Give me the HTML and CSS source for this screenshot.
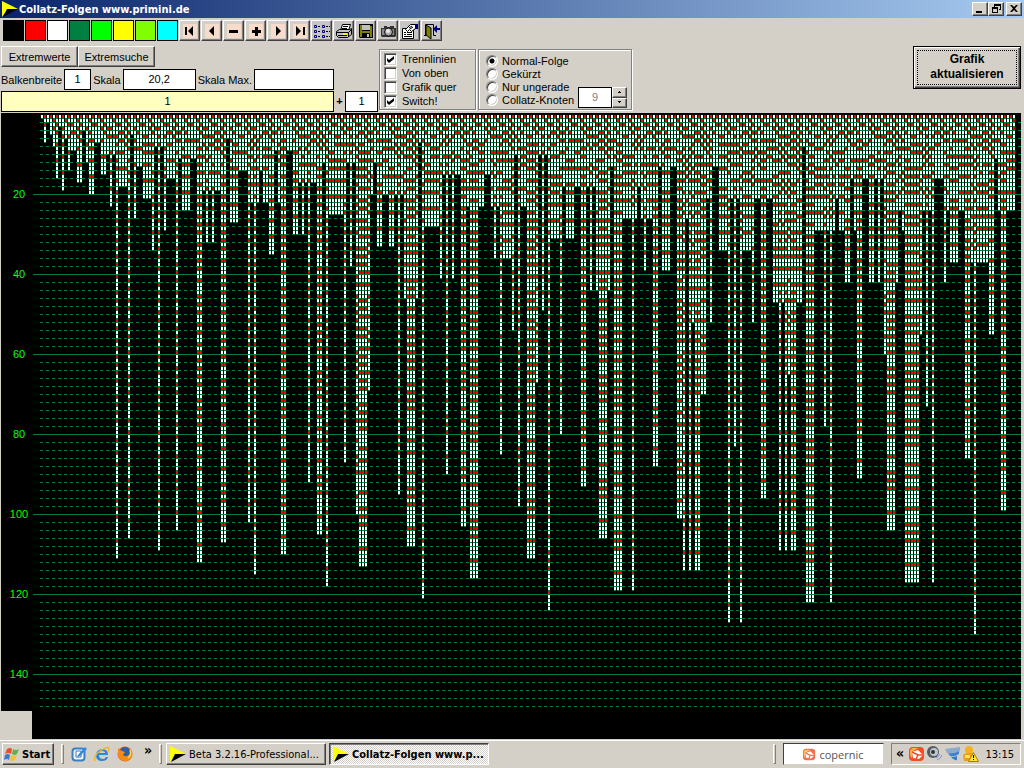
FILE: index.html
```html
<!DOCTYPE html>
<html lang="de">
<head>
    <meta charset="UTF-8">
    <meta name="viewport" content="width=device-width, initial-scale=1.0">
    <title>Collatz-Folgen www.primini.de</title>
    <link rel="stylesheet" href="styles.css">
</head>
<body>
    <svg class="symbols" aria-hidden="true">
        <symbol id="flag" viewBox="0 0 16 16">
            <path d="M0 0L16 8H6L0 16z" fill="#ff0"/>
            <path d="M16 8L1 16L5 8z" fill="#000"/>
        </symbol>
        <symbol id="copernic" viewBox="0 0 16 16">
            <rect x="0" y="1" width="15" height="14" rx="4" fill="#f04e23"/>
            <path d="M1 6Q1 2 5 2H9L3 6L3 12Q1 11 1 6z" fill="#ffb347"/>
            <path d="M3 6l6-2 5 5-4 4-6-1z" fill="#fff"/>
            <path d="M3 6l6 3 5 0M9 9l-2 4" stroke="#f04e23" stroke-width="1.500" fill="none"/>
        </symbol>
    </svg>

    <header class="titlebar">
        <svg class="icon"><use href="#flag"/></svg>
        <h1>Collatz-Folgen www.primini.de</h1>
        <button class="win-button" aria-label="Minimieren"><svg viewBox="0 0 12 10"><path d="M2 7h6v2H2z"/></svg></button>
        <button class="win-button" aria-label="Wiederherstellen"><svg viewBox="0 0 12 10"><path d="M4 0h7v6H9V5h1V2H5v1H4zM2 3h6v6H2zM3 5v3h4V5z" fill-rule="evenodd"/></svg></button>
        <button class="win-button close" aria-label="Schließen"><svg viewBox="0 0 12 10"><path d="M2 1h2l2 2 2-2h2L7 4.500l3 3.500H8L6 6 4 8H2l3-3.500z"/></svg></button>
    </header>

    <div class="toolbar">
        <button class="swatch black" aria-label="Schwarz"></button>
        <button class="swatch red" aria-label="Rot"></button>
        <button class="swatch white" aria-label="Weiß"></button>
        <button class="swatch green" aria-label="Dunkelgrün"></button>
        <button class="swatch lime" aria-label="Grün"></button>
        <button class="swatch yellow" aria-label="Gelb"></button>
        <button class="swatch chartreuse" aria-label="Gelbgrün"></button>
        <button class="swatch cyan" aria-label="Cyan"></button>
        <button class="tool nav" aria-label="Anfang"><svg viewBox="0 0 14 14"><path d="M2 3h2v8H2zM10 2v10L5 7z"/></svg></button>
        <button class="tool nav" aria-label="Zurück"><svg viewBox="0 0 14 14"><path d="M9 2v10L4 7z"/></svg></button>
        <button class="tool nav" aria-label="Weniger"><svg viewBox="0 0 14 14"><path d="M2 6h9v3H2z"/></svg></button>
        <button class="tool nav" aria-label="Mehr"><svg viewBox="0 0 14 14"><path d="M6 3h3v3h3v3H9v3H6V9H3V6h3z"/></svg></button>
        <button class="tool nav" aria-label="Vor"><svg viewBox="0 0 14 14"><path d="M5 2v10l5-5z"/></svg></button>
        <button class="tool nav" aria-label="Ende"><svg viewBox="0 0 14 14"><path d="M3 2v10l5-5zM10 3h2v8h-2z"/></svg></button>
        <button class="tool" aria-label="Liste">
            <svg viewBox="0 0 18 16"><path d="M1.500 2.500h2v2h-2zM9.500 2.500h2v2h-2zM1.500 7.500h2v2h-2zM9.500 7.500h2v2h-2zM1.500 12.500h2v2h-2zM9.500 12.500h2v2h-2z" fill="none" stroke="#000080"/><path d="M5 3.500h3M13 3.500h4M5 8.500h3M13 8.500h4M5 13.500h3M13 13.500h4" stroke="#000" stroke-dasharray="2 1"/></svg>
        </button>
        <button class="tool" aria-label="Drucken">
            <svg viewBox="0 0 18 16"><path d="M5.500 7.500L7.500 1.500H15.500L13.500 7.500z" fill="#fff" stroke="#000"/><path d="M8 3.500h5M7 5.500h5" stroke="#000"/><path d="M1.500 8.500L4.500 6.500H14.500L16.500 5.500V11.500L12.500 14.500H3.500L1.500 12.500z" fill="#c0c0c0" stroke="#000"/><path d="M2 9.500h11.500V14M13.500 9.500l3-3M3 12.500h9" stroke="#000" fill="none"/><path d="M8 11h4" stroke="#ff0" stroke-width="2"/></svg>
        </button>
        <button class="tool" aria-label="Speichern">
            <svg viewBox="0 0 18 16"><path d="M2 1h14v14H3l-1-1z"/><path d="M3 2h2v6h8V3h2v11h-2v-4H5v4H3z" fill="#808000"/><path d="M5 2h8v5H5zM10 11h2v3h-2z" fill="#c0c0c0"/></svg>
        </button>
        <button class="tool" aria-label="Foto">
            <svg viewBox="0 0 18 16"><path d="M2 5h3V3h3v1h3V3h4v2h2v8l-1 1H3l-1-1z" fill="#333"/><path d="M3 6h3v6H3zM13 6h2v6h-2z" fill="#888"/><circle cx="9.500" cy="9" r="4" fill="#aaa" stroke="#111"/><circle cx="9" cy="8" r="2" fill="#e8e8e8"/></svg>
        </button>
        <button class="tool" aria-label="Eigenschaften">
            <svg viewBox="0 0 18 16"><path d="M1.500 5.500h11v10h-11z" fill="#fff" stroke="#000"/><path d="M3 9.500h2M6 9.500h5M3 11.500h2M6 11.500h5M3 13.500h8" stroke="#000"/><path d="M4.500 6.500L9.500 1.500H14.500V5.500L10.500 8.500 8.500 6.500 6.500 8.500z" fill="#fff" stroke="#000"/><path d="M8 5l3-2M9 6l3-2" stroke="#000"/><path d="M14 1h3v5h-3z" fill="#000080"/></svg>
        </button>
        <button class="tool" aria-label="Beenden">
            <svg viewBox="0 0 18 16"><path d="M1 12.500h3M2.500 12V1.500H10.500V12.500H13" fill="none" stroke="#000"/><path d="M3 2l5 3v11l-5-4z" fill="#808000" stroke="#000"/><path d="M10 6l4-4v3h3v2h-3v3z" fill="#000080"/></svg>
        </button>
    </div>

    <div class="controls">
        <div class="settings">
            <div class="row">
                <button class="button">Extremwerte</button>
                <button class="button">Extremsuche</button>
            </div>
            <div class="row fields">
                <label for="barWidth">Balkenbreite</label>
                <input class="field narrow" type="text" id="barWidth" value="1">
                <label for="scale">Skala</label>
                <input class="field scale" type="text" id="scale" value="20,2">
                <label for="scaleMax">Skala Max.</label>
                <input class="field max" type="text" id="scaleMax">
            </div>
            <div class="row formula">
                <input class="field start" type="text" value="1" aria-label="Startwert">
                <label class="plus" for="step">+</label>
                <input class="field step" type="text" id="step" value="1">
            </div>
        </div>
        <div class="group checks">
            <label><input type="checkbox" checked>Trennlinien</label>
            <label><input type="checkbox">Von oben</label>
            <label><input type="checkbox">Grafik quer</label>
            <label><input type="checkbox" checked>Switch!</label>
        </div>
        <div class="group modes">
            <div class="radios">
                <label><input type="radio" name="mode" checked>Normal-Folge</label>
                <label><input type="radio" name="mode">Gekürzt</label>
                <label><input type="radio" name="mode">Nur ungerade</label>
                <label><input type="radio" name="mode">Collatz-Knoten</label>
            </div>
            <div class="spinner">
                <input class="field" type="text" value="9" aria-label="Knoten" disabled>
                <div class="spin-buttons">
                    <button aria-label="Mehr Knoten"><svg viewBox="0 0 5 3"><path d="M2 0h1v1h1v1H1V1h1z"/></svg></button>
                    <button aria-label="Weniger Knoten"><svg viewBox="0 0 5 3"><path d="M1 0h3v1H3v1H2V1H1z"/></svg></button>
                </div>
            </div>
        </div>
        <button class="update"><span>Grafik<br>aktualisieren</span></button>
    </div>

    <main class="chart">
        <div class="axis">
            <span>20</span>
            <span>40</span>
            <span>60</span>
            <span>80</span>
            <span>100</span>
            <span>120</span>
            <span>140</span>
        </div>
        <div class="plot" id="plot"><canvas id="canvas"></canvas></div>
    </main>

    <footer class="taskbar">
        <button class="start-button">
            <svg class="icon" viewBox="0 0 16 16"><path d="M3 3q3-2 5 0l-1 5q-3-2-6 0z" fill="#e8502a"/><path d="M9 3q3 2 6 0l-2 5q-2 2-5 0z" fill="#62b14a"/><path d="M1 9q3-2 5 0l-1 5q-2-2-5 0z" fill="#3d78cf"/><path d="M7 9q3 2 6 0l-2 5q-2 2-5 0z" fill="#f8c030"/></svg>
            Start
        </button>
        <span class="grip"></span>
        <nav class="quick">
            <a href="#" aria-label="Desktop"><svg class="icon" viewBox="0 0 16 16"><rect x="1.500" y="2.500" width="12" height="12" rx="3" fill="#eaf5ff" stroke="#3a80c8" stroke-width="2"/><path d="M5 5h5v6H5z" fill="#fff" stroke="#57a"/><path d="M7 9l7-8 2 2-7 7-3 1z" fill="#3289dc"/></svg></a>
            <a href="#" aria-label="Internet Explorer"><svg class="icon" viewBox="0 0 16 16"><path d="M14 9H5q0 4 4 4 2 0 3-2h2q-1 4-6 4-6 0-6-6 0-5 6-6 6 0 6 6zM5 7h6q0-2-3-2-2 0-3 2z" fill="#2289e5" fill-rule="evenodd"/><path d="M1 15Q-1 10 6 5q9-6 9-2 0 1-1 3" fill="none" stroke="#f0b52c" stroke-width="1.500"/></svg></a>
            <a href="#" aria-label="Firefox"><svg class="icon" viewBox="0 0 16 16"><circle cx="8" cy="8" r="7.500" fill="#e66000"/><circle cx="8" cy="6" r="5" fill="#285fae"/><path d="M1 2q1 2 4 3l3 1-2 3q3 3 7-1 1-4-1-6 4 3 3 8-2 5-7 5-6 0-7-6z" fill="#f58a1c"/><path d="M13 4q2 5-2 8" fill="none" stroke="#ffd54a" stroke-width="1.500"/></svg></a>
            <a class="more" href="#">»</a>
        </nav>
        <span class="grip second"></span>
        <button class="task"><svg class="icon"><use href="#flag"/></svg>Beta 3.2.16-Professional...</button>
        <button class="task active"><svg class="icon"><use href="#flag"/></svg>Collatz-Folgen www.p...</button>
        <span class="grip last"></span>
        <div class="copernic"><svg class="icon"><use href="#copernic"/></svg>copernic</div>
        <div class="tray">
            <a class="more" href="#">«</a>
            <svg class="icon"><use href="#copernic"/></svg>
            <svg class="icon" viewBox="0 0 16 16"><circle cx="6" cy="6" r="6" fill="#555b63"/><circle cx="7" cy="6" r="4" fill="#bfc6cf"/><circle cx="6" cy="6" r="2" fill="#333"/><path d="M10 14q4-1 5-5M9 12q3-1 4-4" fill="none" stroke="#7d9bdc"/></svg>
            <svg class="icon" viewBox="0 0 16 16"><path d="M0 3L15 1V5Q8 8 2 7z" fill="#8fa9cd"/><path d="M3 7Q9 8 14 5V8Q10 11 5 10z" fill="#3c82d0"/><path d="M6 11Q10 11 12 10V14Q9 15 6 11z" fill="#397bc7"/></svg>
            <svg class="icon" viewBox="0 0 16 16"><circle cx="6" cy="4" r="4" fill="#f4b120"/><path d="M0 9l3-2h7l3 3v5H1z" fill="#e9a012"/><path d="M2 9h5v3H2z" fill="#ffdf5a"/><path d="M10.500 6.500L15.500 15.500H5.500z" fill="#ffe640" stroke="#b07800"/><path d="M10 9h1v3h-1zM10 13h1v1h-1z"/></svg>
            <time>13:15</time>
        </div>
    </footer>

    <script src="script.js"></script>
</body>
</html>
```
FILE: styles.css
```css
* {
    box-sizing: border-box;
}
body {
    margin: 0;
    height: 100vh;
    display: flex;
    flex-direction: column;
    background: #d4d0c8;
    color: #000;
    font-family: "Liberation Sans", Arial, sans-serif;
    font-size: 11px;
    overflow: hidden;
}
button, input {
    font: inherit;
    color: inherit;
    margin: 0;
    padding: 0;
}
button {
    background: #d4d0c8;
    border: 1px solid;
    border-color: #fff #404040 #404040 #fff;
    box-shadow: inset -1px -1px #808080;
}
svg {
    display: block;
}
.symbols {
    position: absolute;
    width: 0;
    height: 0;
}
.icon {
    width: 16px;
    height: 16px;
    flex: none;
}

/* title bar */
.titlebar {
    display: flex;
    align-items: center;
    height: 18px;
    flex: none;
    padding: 0 2px;
    background: linear-gradient(to right, #0a246a, #a6caf0);
    color: #fff;
}
.titlebar h1 {
    flex: 1;
    margin: 0 0 0 1px;
    font-family: "DejaVu Sans Condensed", "DejaVu Sans", sans-serif;
    font-size: 11px;
    font-weight: bold;
}
.win-button {
    width: 16px;
    height: 14px;
}
.win-button svg {
    width: 12px;
    height: 10px;
    margin: 0 1px;
}
.win-button.close {
    margin-left: 2px;
}

/* colours and tools */
.toolbar {
    display: flex;
    gap: 1px;
    height: 24px;
    flex: none;
    padding: 2px 3px 0;
}
.swatch {
    width: 21px;
    height: 21px;
    border: 1px solid #000;
    box-shadow: none;
}
.black { background: #000; }
.red { background: #f00; }
.white { background: #fff; }
.green { background: #008040; }
.lime { background: #0f0; }
.yellow { background: #ff0; }
.chartreuse { background: #80ff00; }
.cyan { background: #0ff; }
.tool {
    width: 21px;
    height: 21px;
    display: flex;
    align-items: center;
    justify-content: center;
    background: #c8c6c2;
}
.tool svg {
    width: 18px;
    height: 16px;
    flex: none;
}
.nav {
    background: #d4d0c8;
}
.nav svg {
    width: 14px;
    height: 14px;
    background: #f8dccb;
}

/* settings */
.controls {
    display: flex;
    align-items: flex-start;
    height: 71px;
    flex: none;
    padding: 4px 3px 0 1px;
}
.settings {
    width: 378px;
    display: flex;
    flex-direction: column;
    gap: 1px;
}
.row {
    display: flex;
    align-items: flex-start;
    height: 21px;
}
.row:first-child {
    height: 22px;
}
.fields {
    align-items: center;
    gap: 2px;
}
.fields label {
    white-space: nowrap;
}
.button {
    width: 77px;
    height: 21px;
}
.field {
    height: 21px;
    padding-bottom: 2px;
    border: 1px solid #000;
    background: #fff;
    text-align: center;
    min-width: 0;
}
.narrow {
    width: 27px;
}
.scale {
    width: 73px;
}
.max {
    width: 80px;
    margin-left: auto;
    margin-right: 45px;
}
.start {
    width: 333px;
    background: #ffffc0;
}
.plus {
    width: 11px;
    line-height: 21px;
    text-align: center;
    font-weight: bold;
}
.step {
    width: 33px;
}
.group {
    border: 1px solid #808080;
    box-shadow: 1px 1px #fff, inset 1px 1px #fff;
    height: 61px;
    margin-top: 3px;
}
.group label {
    display: flex;
    align-items: center;
    gap: 5px;
    white-space: nowrap;
}
.checks {
    width: 97px;
    padding: 2px 4px;
}
.checks label {
    height: 14px;
}
.group input[type="checkbox"],
.group input[type="radio"] {
    appearance: none;
    width: 13px;
    height: 13px;
    flex: none;
    background: #fff;
    border: 1px solid;
    border-color: #808080 #fff #fff #808080;
    box-shadow: inset 1px 1px #404040, inset -1px -1px #d4d0c8;
}
.group input[type="checkbox"]:checked {
    background: #fff url("data:image/svg+xml,%3Csvg xmlns='http://www.w3.org/2000/svg' viewBox='0 0 11 11'%3E%3Cpath d='M2 4l2 2 5-4v3L4 9 2 7z'/%3E%3C/svg%3E");
}
.group input[type="radio"] {
    width: 12px;
    height: 12px;
    border-radius: 50%;
}
.group input[type="radio"]:checked {
    background: radial-gradient(circle, #000 2px, #fff 3px);
}
.modes {
    width: 154px;
    margin-left: 2px;
    padding: 4px 4px 0 7px;
    display: flex;
    justify-content: space-between;
}
.radios label {
    height: 13px;
    gap: 4px;
}
.spinner {
    display: flex;
    height: 21px;
    margin-top: 33px;
}
.spinner .field {
    width: 34px;
    color: #808080;
}
.spin-buttons {
    display: flex;
    flex-direction: column;
    width: 15px;
}
.spin-buttons button {
    flex: 1;
    display: flex;
    align-items: center;
    justify-content: center;
}
.spin-buttons svg {
    width: 5px;
    height: 3px;
}
.update {
    width: 108px;
    height: 43px;
    margin-left: auto;
    padding: 2px;
    border: 1px solid #000;
    box-shadow: inset 1px 1px #fff, inset -1px -1px #404040, inset -2px -2px #808080;
    font-size: 12px;
    font-weight: bold;
    line-height: 15px;
}
.update span {
    display: block;
    height: 35px;
    margin: 1px;
    padding-top: 1px;
    border: 1px dotted #000;
}

/* chart */
.chart {
    flex: 1;
    min-height: 0;
    display: flex;
    padding: 0 3px 0 1px;
}
.axis {
    display: flex;
    flex-direction: column;
    width: 31px;
    height: 598px;
    padding: 41px 0 0 5px;
    background: #000;
    color: #0f0;
    text-align: center;
}
.axis span {
    height: 80px;
    line-height: 80px;
}
.plot {
    flex: 1;
    min-width: 0;
    background: #000;
    overflow: hidden;
}
.plot canvas {
    display: block;
}

/* taskbar */
.taskbar {
    display: flex;
    align-items: center;
    height: 29px;
    flex: none;
    padding: 1px 3px 1px 2px;
    border-top: 1px solid #d4d0c8;
    box-shadow: inset 0 1px #fff;
    font-family: "DejaVu Sans Condensed", "DejaVu Sans", sans-serif;
}
.start-button {
    display: flex;
    align-items: center;
    gap: 2px;
    width: 52px;
    height: 22px;
    padding-left: 1px;
    font-weight: bold;
}
.grip {
    width: 3px;
    height: 20px;
    margin: 0 7px;
    border: 1px solid;
    border-color: #fff #808080 #808080 #fff;
}
.grip.second {
    margin: 0 4px 0 0;
}
.quick {
    display: flex;
    align-items: center;
    gap: 7px;
    width: 88px;
}
.more {
    color: #000;
    font-size: 14px;
    font-weight: bold;
    text-decoration: none;
}
.quick .more {
    margin: -8px 0 0 4px;
}
.task {
    display: flex;
    align-items: center;
    gap: 3px;
    width: 160px;
    height: 22px;
    margin-right: 3px;
    padding-left: 3px;
    white-space: nowrap;
    overflow: hidden;
}
.task.active {
    border-color: #404040 #fff #fff #404040;
    box-shadow: inset 1px 1px #808080;
    background: repeating-conic-gradient(#fff 0 25%, #d4d0c8 0 50%) 0 0 / 2px 2px;
    font-weight: bold;
}
.grip.last {
    margin-left: auto;
}
.copernic {
    display: flex;
    align-items: center;
    justify-content: center;
    gap: 3px;
    width: 101px;
    height: 22px;
    background: #fff;
    border: 1px solid;
    border-color: #404040 #d4d0c8 #d4d0c8 #404040;
    color: #555;
    font-family: "Open Sans", sans-serif;
    font-size: 11px;
}
.copernic .icon {
    width: 13px;
    height: 13px;
    opacity: 0.8;
}
.tray {
    display: flex;
    align-items: center;
    gap: 2px;
    width: 130px;
    height: 22px;
    margin-left: 7px;
    padding: 0 6px 0 4px;
    border: 1px solid;
    border-color: #808080 #fff #fff #808080;
}
.tray .more {
    width: 11px;
    margin-top: -2px;
}
.tray time {
    margin-left: auto;
}
```
FILE: script.js
```javascript
const STEP = 4;        // Höhe eines Folgengliedes
const BAR = 3;         // Breite eines Balkens samt Abstand
const MAX_STEP = 148;

function draw() {
    const plot = document.getElementById("plot");
    const canvas = document.getElementById("canvas");
    const w = canvas.width = plot.clientWidth;
    canvas.height = plot.clientHeight;
    const ctx = canvas.getContext("2d");

    // Skala
    ctx.fillStyle = "#008040";
    for (let k = 2; k <= MAX_STEP; k += 2) {
        const y = 1 + k * STEP;
        if (k % 20 === 0) {
            ctx.fillRect(1, y, w, 1);
        } else {
            for (let x = 8; x < w; x += 6) {
                ctx.fillRect(x, y, 3, 1);
            }
        }
    }

    // Balken: gerade Glieder weiß, ungerade rot, dazwischen Trennlinien
    for (let n = 2; 9 + (n - 2) * BAR + 2 <= w - 5; n++) {
        const x = 9 + (n - 2) * BAR;
        let value = n;
        for (let k = 0; value !== 1; k++) {
            ctx.fillStyle = value % 2 ? "#ff0000" : "#ffffff";
            ctx.fillRect(x, 2 + k * STEP, 2, 3);
            ctx.fillStyle = "#008040";
            ctx.fillRect(x, 5 + k * STEP, 2, 1);
            value = value % 2 ? 3 * value + 1 : value / 2;
        }
    }
}

draw();
window.addEventListener("resize", draw);
```
